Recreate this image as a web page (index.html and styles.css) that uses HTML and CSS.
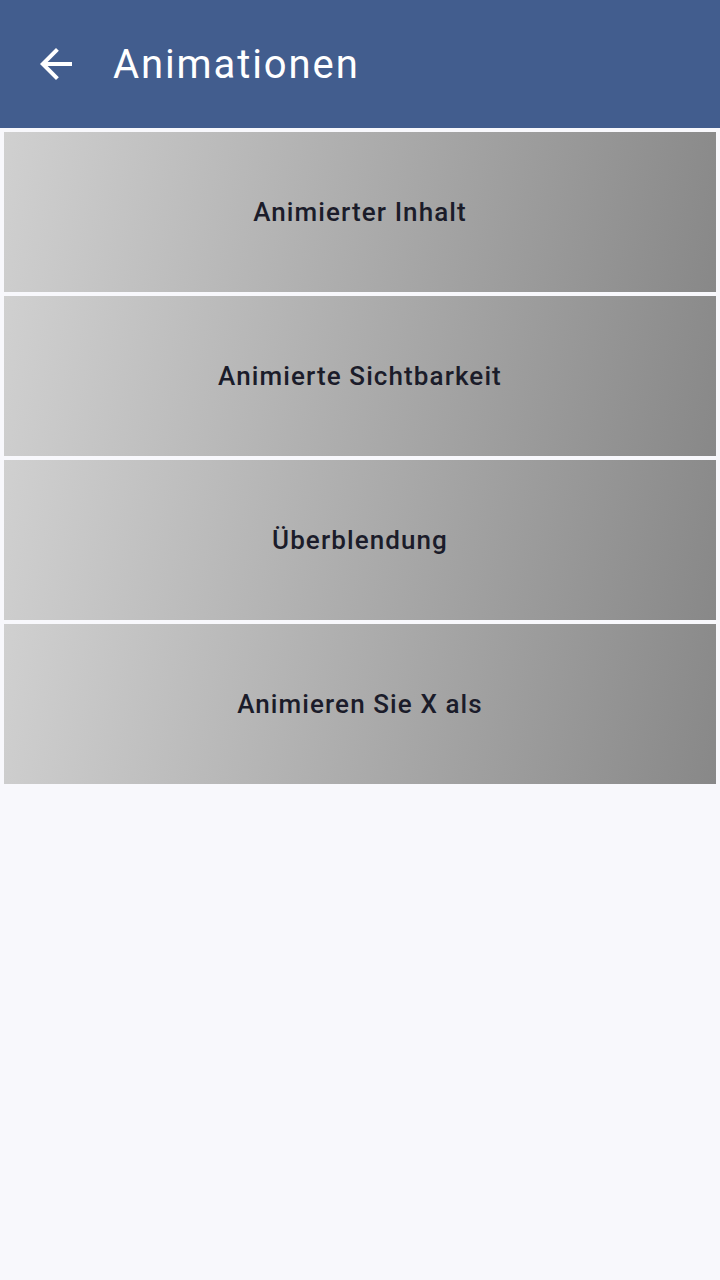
FILE: index.html
```html
<!DOCTYPE html>
<html lang="de">
<head>
<meta charset="utf-8">
<link rel="stylesheet" href="styles.css">
</head>
<body>
<header class="appbar">
  <svg class="back" viewBox="0 0 24 24" width="48" height="48"><path d="M20 11H7.83l5.59-5.59L12 4l-8 8 8 8 1.41-1.41L7.83 13H20v-2z" fill="#fff"/></svg>
  <h1 class="title">Animationen</h1>
</header>
<main class="list">
  <div class="item">Animierter Inhalt</div>
  <div class="item">Animierte Sichtbarkeit</div>
  <div class="item">Überblendung</div>
  <div class="item">Animieren Sie X als</div>
</main>
</body>
</html>
```
FILE: styles.css
```css
html, body {
  margin: 0;
  padding: 0;
  background: #f8f8fc;
  font-family: Roboto, "Noto Sans", sans-serif;
  width: 720px;
  height: 1280px;
}
.appbar {
  height: 128px;
  background: #425d8e;
  display: flex;
  align-items: center;
  padding-left: 32px;
  box-sizing: border-box;
}
.back {
  width: 48px;
  height: 48px;
}
.title {
  margin: 0 0 0 33px;
  color: #fff;
  font-weight: 400;
  font-size: 40px;
  letter-spacing: 1.9px;
}
.list {
  display: flex;
  flex-direction: column;
  gap: 4px;
  padding: 4px;
}
.item {
  height: 160px;
  display: flex;
  align-items: center;
  justify-content: center;
  background: linear-gradient(100deg, #d0d0d0 0%, #888888 100%);
  color: #1b1c2a;
  font-size: 26px;
  font-weight: 500;
  letter-spacing: 1.1px;
}
```
